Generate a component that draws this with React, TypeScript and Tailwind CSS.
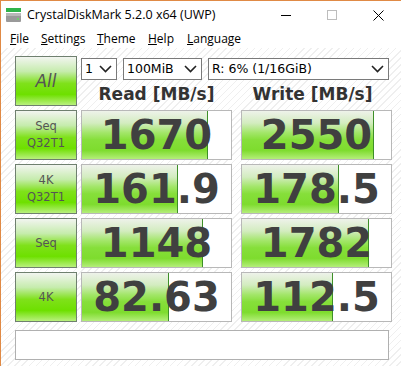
const rows = [
  { l1: "Seq", l2: "Q32T1", r: "1670", rw: 126, w: "2550", ww: 132 },
  { l1: "4K", l2: "Q32T1", r: "161.9", rw: 96, w: "178.5", ww: 97 },
  { l1: "Seq", l2: "", r: "1148", rw: 121, w: "1782", ww: 127 },
  { l1: "4K", l2: "", r: "82.63", rw: 87, w: "112.5", ww: 91 },
]

const hatch =
  "bg-[repeating-linear-gradient(135deg,#ffffff_0px,#ffffff_4px,#efefef_4px,#efefef_5px)]"

const Chevron = () => (
  <svg width="13" height="8" viewBox="0 0 13 8" className="shrink-0">
    <path d="M1 1 L6.5 6.5 L12 1" fill="none" stroke="#222" strokeWidth="1.6" />
  </svg>
)

const Select = ({ text, w }: { text: string; w: string }) => (
  <div className={`${w} h-[22px] border border-[#7a7a7a] bg-white flex items-center justify-between pl-[3px] pr-[4px] font-['DejaVu_Sans',sans-serif] text-[12.5px] text-black`}>
    <span>{text}</span>
    <Chevron />
  </div>
)

const LeftButton = ({ l1, l2, big }: { l1: string; l2: string; big?: boolean }) => (
  <div className="w-[62px] h-[50px] border border-[#6f806f] bg-[linear-gradient(180deg,#f2f5f0_0%,#c6ecad_30%,#7fe11a_55%,#6ee000_78%,#b9f07e_100%)] flex flex-col items-center justify-center text-[#555] font-['DejaVu_Sans',sans-serif] leading-[17px]">
    {big ? (
      <span className="text-[17px] italic">{l1}</span>
    ) : (
      <>
        <span className="text-[11.5px]">{l1}</span>
        {l2 && <span className="text-[11.5px]">{l2}</span>}
      </>
    )}
  </div>
)

const Cell = ({ value, bar }: { value: string; bar: number }) => (
  <div className="relative w-[151px] h-[50px] border border-[#b8b8b8] bg-white">
    <div
      className="h-full border-r border-[#3d8f28] bg-[linear-gradient(180deg,#eef2ea_0%,#d3ecc0_25%,#a3e66a_45%,#86df3a_60%,#7edc2e_82%,#b4ee7a_100%)]"
      style={{ width: bar }}
    />
    <div className="absolute inset-0 flex items-center justify-center font-['DejaVu_Sans',sans-serif] font-bold text-[40px] text-[#404040]">
      {value}
    </div>
  </div>
)

export default function App() {
  return (
    <div className="w-[401px] h-[366px] overflow-hidden bg-white border-t border-l border-[#e08a45] font-['Open_Sans',sans-serif]">
      {/* title bar */}
      <div className="h-[28px] flex items-center">
        <svg width="18" height="16" viewBox="0 0 18 16" className="ml-[4px] mr-[4px]">
          <rect x="1" y="1" width="15" height="4" fill="#2fb34a" />
          <rect x="1" y="6" width="15" height="9" rx="1" fill="#9a9a9a" />
          <rect x="1" y="6" width="15" height="3" fill="#b8b8b8" />
          <circle cx="13" cy="12" r="1" fill="#5fe05f" />
        </svg>
        <span className="text-[12.5px] text-black">CrystalDiskMark 5.2.0 x64 (UWP)</span>
        <div className="ml-auto flex items-center">
          <div className="w-[46px] h-[28px] flex items-center justify-center">
            <div className="w-[10px] h-px bg-black" />
          </div>
          <div className="w-[46px] h-[28px] flex items-center justify-center">
            <div className="w-[10px] h-[10px] border border-[#bdbdbd]" />
          </div>
          <div className="w-[46px] h-[28px] flex items-center justify-center">
            <svg width="11" height="11" viewBox="0 0 11 11">
              <path d="M0.5 0.5 L10.5 10.5 M10.5 0.5 L0.5 10.5" stroke="#000" strokeWidth="1" />
            </svg>
          </div>
        </div>
      </div>
      {/* menu */}
      <div className="h-[19px] flex items-center pl-[9px] text-[12px] text-black">
        <span className="w-[31px]"><u>F</u>ile</span>
        <span className="w-[56px]"><u>S</u>ettings</span>
        <span className="w-[51px]"><u>T</u>heme</span>
        <span className="w-[39px]"><u>H</u>elp</span>
        <span><u>L</u>anguage</span>
      </div>
      {/* client */}
      <div className={`h-full pl-[14px] pt-[8px] ${hatch}`}>
        <div className="flex flex-col gap-[4px]">
          <div className="flex gap-[4px]">
            <LeftButton l1="All" l2="" big />
            <div className="flex flex-col">
              <div className="flex gap-[6px] mt-[2px]">
                <Select text="1" w="w-[36px]" />
                <Select text="100MiB" w="w-[79px]" />
                <Select text="R: 6% (1/16GiB)" w="w-[181px]" />
              </div>
              <div className="flex gap-[5px] mt-[2px] font-['DejaVu_Sans',sans-serif] font-bold text-[17px] text-[#333] leading-[24px]">
                <div className="w-[151px] text-center">Read [MB/s]</div>
                <div className="w-[151px] text-center">Write [MB/s]</div>
              </div>
            </div>
          </div>
          {rows.map((r, i) => (
            <div key={i} className="flex gap-[4px]">
              <LeftButton l1={r.l1} l2={r.l2} />
              <Cell value={r.r} bar={r.rw} />
              <div className="w-px" />
              <Cell value={r.w} bar={r.ww} />
            </div>
          ))}
        </div>
        <div className="mt-[8px] w-[374px] h-[30px] border border-[#b0b0b0] bg-white" />
      </div>
    </div>
  )
}
